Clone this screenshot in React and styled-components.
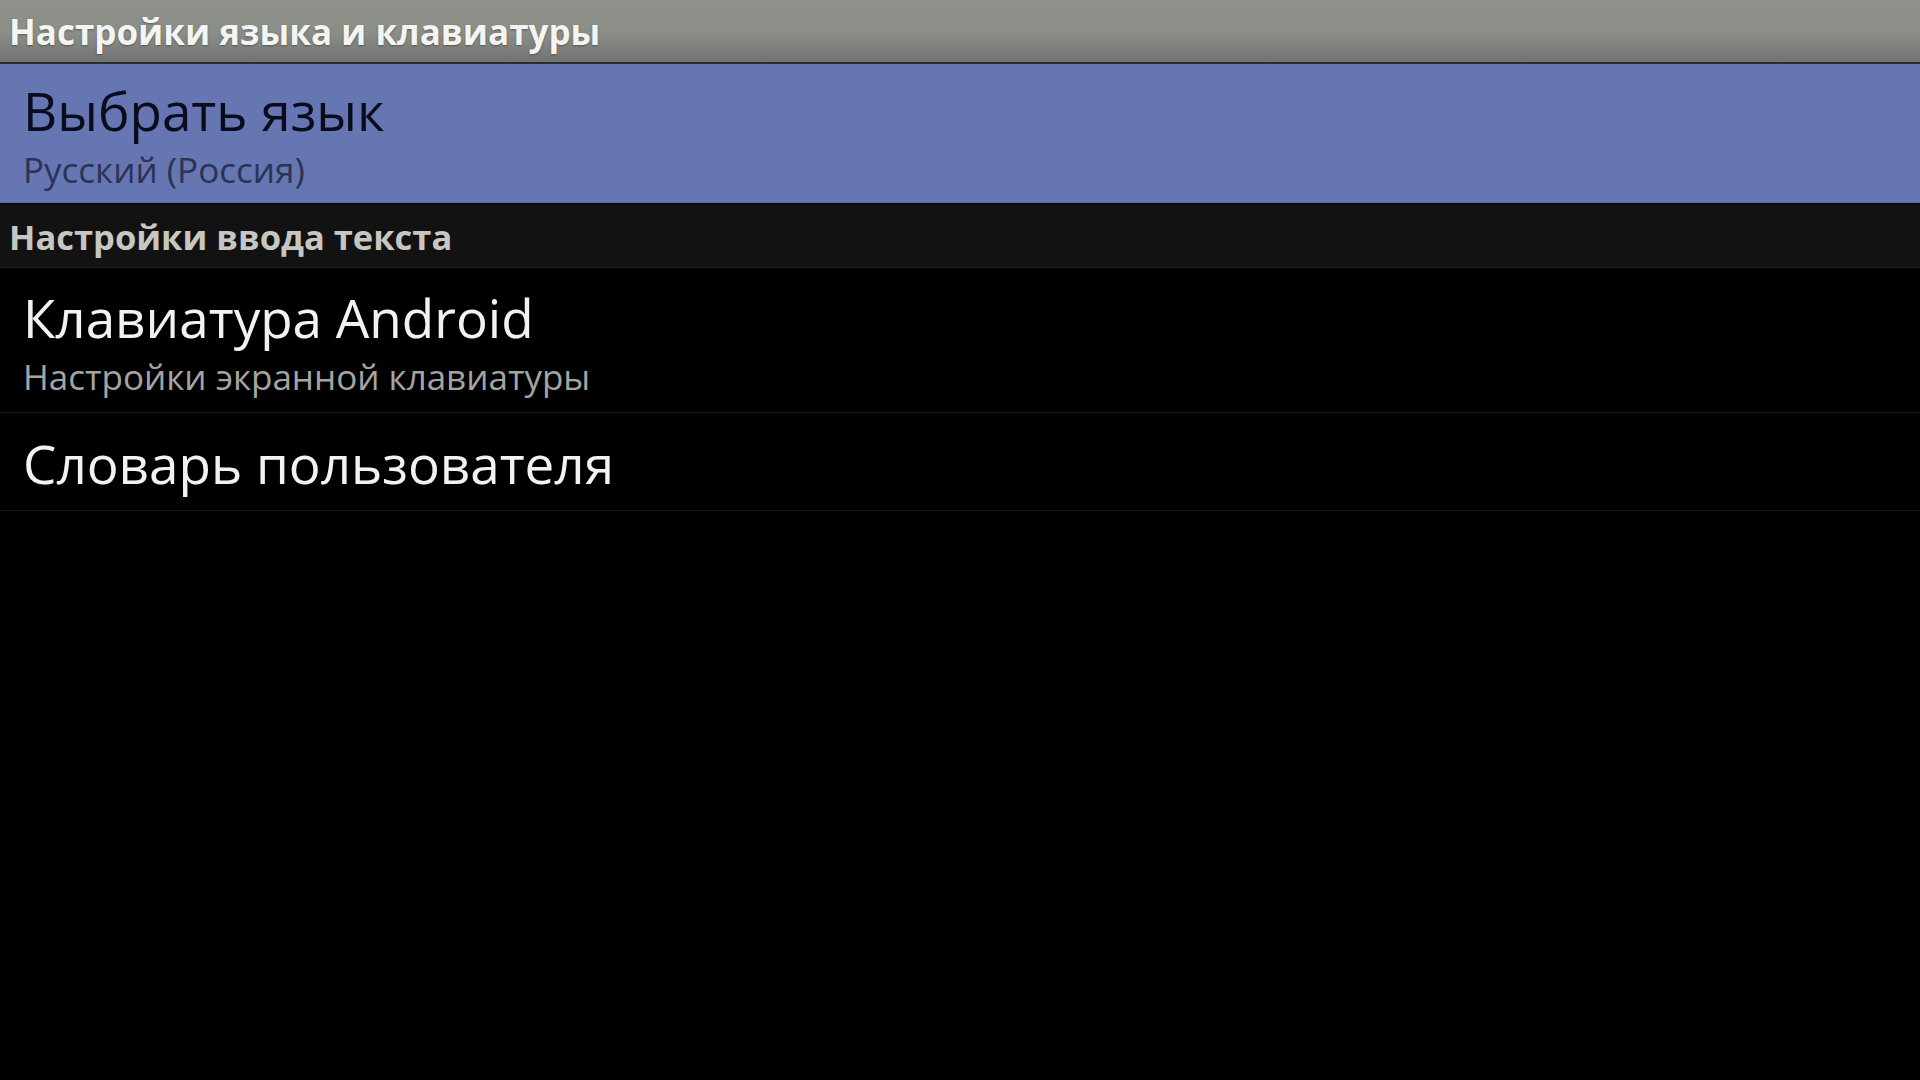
import React from 'react';
import styled, { createGlobalStyle } from 'styled-components';

const GlobalStyle = createGlobalStyle`
  html, body {
    margin: 0;
    padding: 0;
    background: #000;
  }
  body {
    font-family: "Open Sans", "Noto Sans", "DejaVu Sans", sans-serif;
  }
`;

const Screen = styled.div`
  width: 1920px;
  height: 1080px;
  background: #000;
  overflow: hidden;
  display: flex;
  flex-direction: column;
`;

const TitleBar = styled.div`
  height: 62px;
  display: flex;
  align-items: center;
  padding-left: 9px;
  background: linear-gradient(to bottom, #8e928b 0%, #8a8e87 55%, #707270 100%);
  border-bottom: 2px solid #2a2e34;
  color: #f4f4f2;
  font-size: 35px;
  font-weight: 700;
  text-shadow: 0 1px 2px rgba(0, 0, 0, 0.35);
`;

const SectionHeader = styled.div`
  height: 62px;
  display: flex;
  align-items: center;
  padding-left: 9px;
  background: #121212;
  border-top: 2px solid #0a0c12;
  border-bottom: 1px solid #1e1e1e;
  color: #c6c6c2;
  font-size: 34.5px;
  font-weight: 700;
`;

const Item = styled.div`
  height: ${(p) => p.$height}px;
  box-sizing: border-box;
  display: flex;
  flex-direction: column;
  justify-content: center;
  padding-left: 23px;
  background: ${(p) => (p.$selected ? '#6676b2' : '#000')};
  border-bottom: 1px solid ${(p) => (p.$selected ? '#5a6aa4' : '#1a1a1a')};
`;

const Primary = styled.div`
  margin-top: 4px;
  font-size: 53px;
  line-height: 68px;
  color: ${(p) => (p.$selected ? '#0a0c1c' : '#f2f2f2')};
`;

const Secondary = styled.div`
  margin-top: 2px;
  font-size: 35px;
  line-height: 46px;
  color: ${(p) => (p.$selected ? '#2c3354' : '#a4a4a2')};
`;

const items = [
  { title: 'Выбрать язык', summary: 'Русский (Россия)', selected: true, height: 139 },
];

const inputItems = [
  { title: 'Клавиатура Android', summary: 'Настройки экранной клавиатуры', height: 145 },
  { title: 'Словарь пользователя', height: 98 },
];

const Pref = ({ title, summary, selected, height }) => (
  <Item $selected={selected} $height={height}>
    <Primary $selected={selected}>{title}</Primary>
    {summary && <Secondary $selected={selected}>{summary}</Secondary>}
  </Item>
);

export default function App() {
  return (
    <Screen>
      <GlobalStyle />
      <TitleBar>Настройки языка и клавиатуры</TitleBar>
      {items.map((it) => <Pref key={it.title} {...it} />)}
      <SectionHeader>Настройки ввода текста</SectionHeader>
      {inputItems.map((it) => <Pref key={it.title} {...it} />)}
    </Screen>
  );
}
